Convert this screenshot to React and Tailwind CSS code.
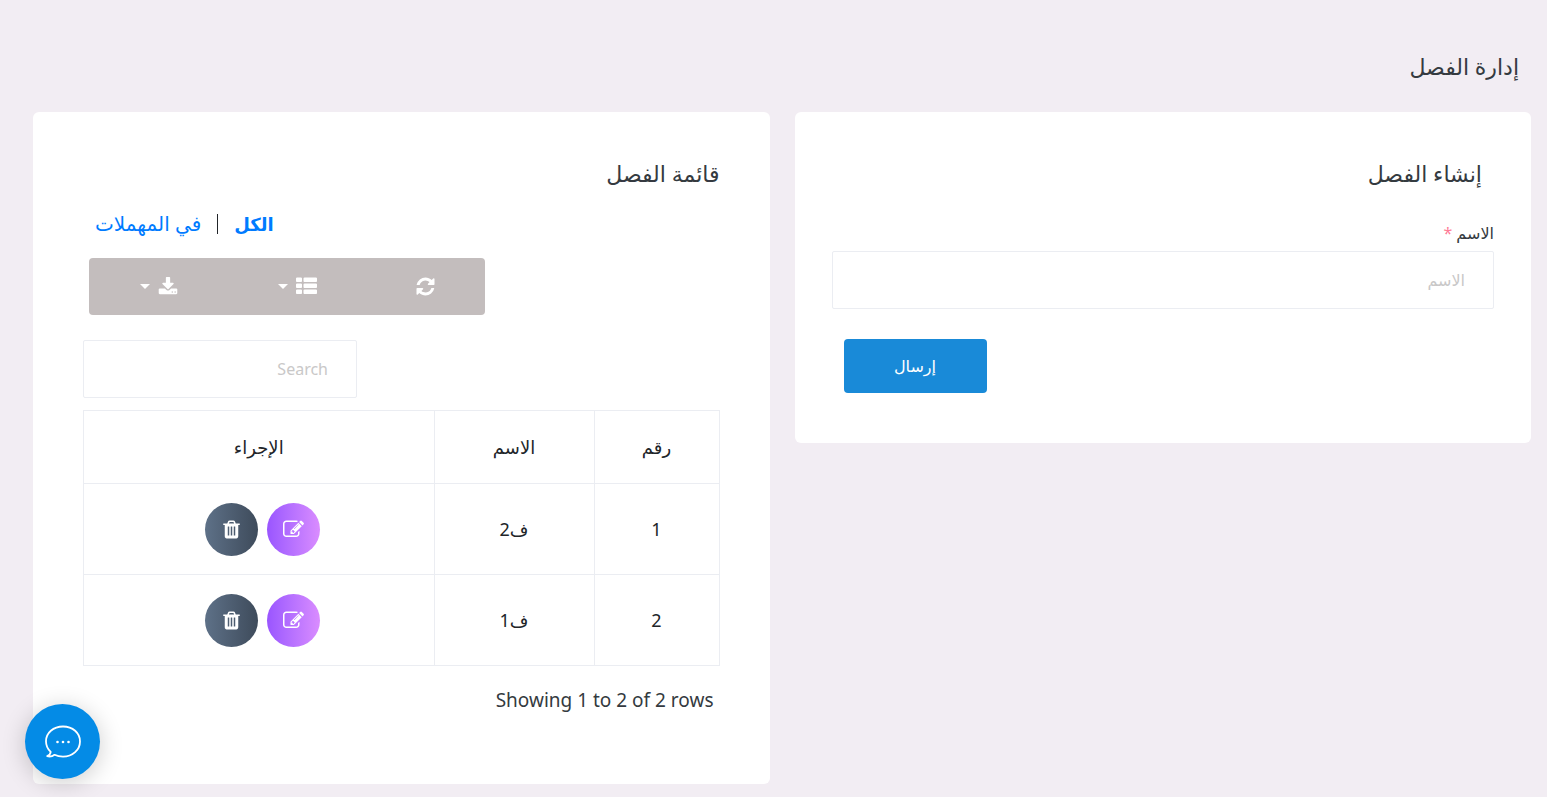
const rows = [
  { id: 1, name: "ف2" },
  { id: 2, name: "ف1" },
]

const icons = {
  edit: "M888 1184l116-116-152-152-116 116v56h96v96h56zm440-720q-16-16-33 1l-350 350q-17 17-1 33t33-1l350-350q17-17 1-33zm80 594v190q0 119-84.5 203.500t-203.500 84.500h-832q-119 0-203.500-84.500t-84.500-203.500v-832q0-119 84.500-203.500t203.500-84.500h832q63 0 117 25 15 7 18 23 3 17-9 29l-49 49q-14 14-32 8-23-6-45-6h-832q-66 0-113 47t-47 113v832q0 66 47 113t113 47h832q66 0 113-47t47-113v-126q0-13 9-22l64-64q15-15 35-7t20 29zm-96-738l288 288-672 672h-288v-288zm444 132l-92 92-288-288 92-92q28-28 68-28t68 28l152 152q28 28 28 68t-28 68z",
  trash: "M704 1376v-704q0-14-9-23t-23-9h-64q-14 0-23 9t-9 23v704q0 14 9 23t23 9h64q14 0 23-9t9-23zm256 0v-704q0-14-9-23t-23-9h-64q-14 0-23 9t-9 23v704q0 14 9 23t23 9h64q14 0 23-9t9-23zm256 0v-704q0-14-9-23t-23-9h-64q-14 0-23 9t-9 23v704q0 14 9 23t23 9h64q14 0 23-9t9-23zm-544-992h448l-48-117q-7-9-17-11h-317q-10 2-17 11zm928 32v64q0 14-9 23t-23 9h-96v948q0 83-47 143.500t-113 60.500h-832q-66 0-113-58.500t-47-141.500v-952h-96q-14 0-23-9t-9-23v-64q0-14 9-23t23-9h309l70-167q15-37 54-63t79-26h320q40 0 79 26t54 63l70 167h309q14 0 23 9t9 23z",
  refresh: "M1639 1056q0 5-1 7-64 268-268 434.500t-478 166.500q-146 0-282.500-55t-243.500-157l-129 129q-19 19-45 19t-45-19-19-45v-448q0-26 19-45t45-19h448q26 0 45 19t19 45-19 45l-137 137q71 66 161 102t187 36q134 0 250-65t186-179q11-17 53-117 8-23 30-23h192q13 0 22.500 9.500t9.500 22.500zm25-800v448q0 26-19 45t-45 19h-448q-26 0-45-19t-19-45 19-45l138-138q-148-137-349-137-134 0-250 65t-186 179q-11 17-53 117-8 23-30 23h-199q-13 0-22.500-9.500t-9.500-22.500v-7q65-268 270-434.500t480-166.500q146 0 284 55.500t245 156.500l130-129q19-19 45-19t45 19 19 45z",
  list: "M512 1248v192q0 40-28 68t-68 28h-320q-40 0-68-28t-28-68v-192q0-40 28-68t68-28h320q40 0 68 28t28 68zm0-512v192q0 40-28 68t-68 28h-320q-40 0-68-28t-28-68v-192q0-40 28-68t68-28h320q40 0 68 28t28 68zm1280 512v192q0 40-28 68t-68 28h-960q-40 0-68-28t-28-68v-192q0-40 28-68t68-28h960q40 0 68 28t28 68zm-1280-1024v192q0 40-28 68t-68 28h-320q-40 0-68-28t-28-68v-192q0-40 28-68t68-28h320q40 0 68 28t28 68zm1280 512v192q0 40-28 68t-68 28h-960q-40 0-68-28t-28-68v-192q0-40 28-68t68-28h960q40 0 68 28t28 68zm0-512v192q0 40-28 68t-68 28h-960q-40 0-68-28t-28-68v-192q0-40 28-68t68-28h960q40 0 68 28t28 68z",
  download: "M1344 1344q0-26-19-45t-45-19-45 19-19 45 19 45 45 19 45-19 19-45zm256 0q0-26-19-45t-45-19-45 19-19 45 19 45 45 19 45-19 19-45zm128-224v320q0 40-28 68t-68 28h-1472q-40 0-68-28t-28-68v-320q0-40 28-68t68-28h465l135 136q58 56 136 56t136-56l136-136h464q40 0 68 28t28 68zm-325-569q17 41-14 70l-448 448q-18 19-45 19t-45-19l-448-448q-31-29-14-70 17-39 59-39h256v-448q0-26 19-45t45-19h256q26 0 45 19t19 45v448h256q42 0 59 39z",
}

function Icon({ name, size }) {
  return (
    <svg width={size} height={size} viewBox="0 0 1792 1792" fill="currentColor" aria-hidden="true">
      <path d={icons[name]} />
    </svg>
  )
}

function Caret() {
  return (
    <svg width="10" height="5" viewBox="0 0 10 5" fill="currentColor" aria-hidden="true">
      <path d="M0 0h10L5 5z" />
    </svg>
  )
}

function ChatIcon() {
  return (
    <svg width="38" height="34" viewBox="0 0 38 34" fill="none" aria-hidden="true">
      <path
        d="M19 1.5C9.300 1.500 2 8 2 16.300c0 4.200 1.700 7.900 4.700 10.600-.3 2-1.600 3.500-3.500 4.300 2.500.6 5.200.2 7.300-1.400 2.600 1.300 5.400 1.900 8.500 1.900 9.700 0 17-6.900 17-15.300S28.700 1.500 19 1.500z"
        stroke="white"
        strokeWidth="1.800"
        strokeLinejoin="round"
      />
      <circle cx="13.500" cy="17" r="1.300" fill="white" />
      <circle cx="19" cy="17" r="1.300" fill="white" />
      <circle cx="24.500" cy="17" r="1.300" fill="white" />
    </svg>
  )
}

function CreateClass() {
  return (
    <section className="rounded-md bg-white px-[37px] pt-[47px] pb-[50px]">
      <h2 className="px-3 text-[22px] leading-7">إنشاء الفصل</h2>
      <form className="mt-[34px]" onSubmit={(e) => e.preventDefault()}>
        <label htmlFor="name" className="block text-base leading-6">
          الاسم <span className="text-[#fe7c96]">*</span>
        </label>
        <input
          id="name"
          type="text"
          placeholder="الاسم"
          className="mt-[6px] block h-[58px] w-full rounded-xs border border-[#ebedf2] px-7 text-base placeholder:text-[#c9c8c8]"
        />
        <div className="mt-[30px] flex justify-end px-3">
          <button type="submit" className="h-[54px] w-[143px] rounded bg-[#198ad8] text-base text-white">
            إرسال
          </button>
        </div>
      </form>
    </section>
  )
}

function ClassTable() {
  return (
    <table className="mt-3 w-full border-collapse text-center text-lg text-[#212529]">
      <thead>
        <tr className="h-[73px]">
          <th className="w-[125px] border border-[#ebedf2] font-normal">رقم</th>
          <th className="w-[160px] border border-[#ebedf2] font-normal">الاسم</th>
          <th className="border border-[#ebedf2] font-normal">الإجراء</th>
        </tr>
      </thead>
      <tbody>
        {rows.map((row) => (
          <tr key={row.id} className="h-[91px]">
            <td className="border border-[#ebedf2]">{row.id}</td>
            <td className="border border-[#ebedf2]">{row.name}</td>
            <td className="border border-[#ebedf2]">
              <div className="flex justify-center gap-[9px] pl-2">
                <button
                  aria-label="تعديل"
                  className="flex size-[53px] items-center justify-center rounded-full bg-linear-to-r from-[#9a55ff] to-[#da8cff] text-white"
                >
                  <Icon name="edit" size={21} />
                </button>
                <button
                  aria-label="حذف"
                  className="flex size-[53px] items-center justify-center rounded-full bg-linear-to-r from-[#5e7188] to-[#3e4b5b] text-white"
                >
                  <Icon name="trash" size={21} />
                </button>
              </div>
            </td>
          </tr>
        ))}
      </tbody>
    </table>
  )
}

function ClassList() {
  return (
    <section className="rounded-md bg-white px-[50px] pt-[47px] pb-[70px]">
      <h2 className="text-[22px] leading-7">قائمة الفصل</h2>
      <div className="mt-[21px] flex items-center justify-end gap-4 px-3 text-xl leading-8 text-[#007bff]">
        <a href="#all" className="text-lg leading-8 font-bold">الكل</a>
        <span className="h-5 w-px bg-[#212529]" />
        <a href="#trashed">في المهملات</a>
      </div>
      <div className="mt-[18px] flex justify-end px-[6px]">
        <div className="flex h-[57px] w-[396px] rounded bg-[#c3bdbd] text-white">
          <button aria-label="تحديث" className="flex w-[119px] items-center justify-center">
            <Icon name="refresh" size={21} />
          </button>
          <button aria-label="الأعمدة" className="flex w-[138px] items-center justify-center gap-2">
            <Icon name="list" size={21} />
            <Caret />
          </button>
          <button aria-label="تصدير" className="flex flex-1 items-center justify-center gap-2">
            <Icon name="download" size={20} />
            <Caret />
          </button>
        </div>
      </div>
      <div className="mt-[25px] flex justify-end">
        <input
          type="search"
          aria-label="Search"
          placeholder="Search"
          className="h-[58px] w-[274px] rounded-xs border border-[#ebedf2] px-7 text-base placeholder:text-[#c9c8c8]"
        />
      </div>
      <ClassTable />
      <p dir="ltr" className="mt-5 px-[6px] text-right text-[19px] leading-7">
        Showing 1 to 2 of 2 rows
      </p>
    </section>
  )
}

export default function App() {
  return (
    <main
      dir="rtl"
      className="min-h-screen bg-[#f2edf3] pt-[52px] pr-4 pb-3 pl-[33px] font-['Noto_Sans','DejaVu_Sans',sans-serif] text-[#343a40]"
    >
      <h1 className="px-3 text-[22px] leading-7">إدارة الفصل</h1>
      <div className="mt-8 grid grid-cols-2 items-start gap-[25px]">
        <CreateClass />
        <ClassList />
      </div>
      <button
        aria-label="محادثة"
        className="fixed bottom-[18px] left-[25px] flex size-[75px] items-center justify-center rounded-full bg-[#048be6] shadow-[0_4px_24px_rgba(0,0,0,0.2)]"
      >
        <ChatIcon />
      </button>
    </main>
  )
}
